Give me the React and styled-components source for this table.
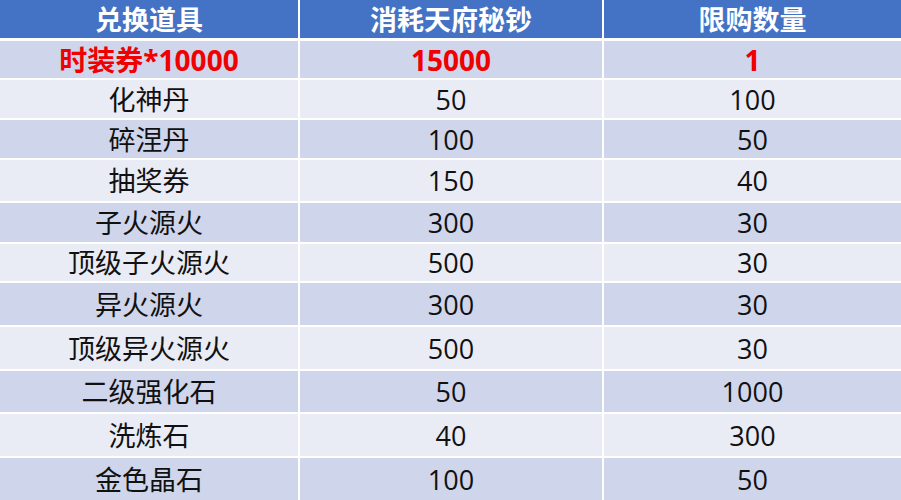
import React from 'react';
import styled, { createGlobalStyle } from 'styled-components';

const GlobalStyle = createGlobalStyle`
  html, body {
    margin: 0;
    padding: 0;
    background: #ffffff;
  }
  body {
    font-family: "Open Sans", "Noto Sans CJK SC", sans-serif;
  }
`;

const Table = styled.div`
  width: 901px;
  height: 500px;
  overflow: hidden;
  display: flex;
  flex-direction: column;
  background: #ffffff;
`;

const Row = styled.div`
  display: grid;
  grid-template-columns: 298px 302px 1fr;
  column-gap: 2px;
  height: ${(p) => p.$height}px;
  padding-bottom: ${(p) => (p.$header ? 3 : 2)}px;
  box-sizing: border-box;
  flex-shrink: 0;
`;

const Cell = styled.div`
  display: flex;
  align-items: center;
  justify-content: center;
  background: ${(p) => (p.$header ? '#4472c4' : p.$dark ? '#cfd5ea' : '#e9ebf5')};
  color: ${(p) => (p.$header ? '#ffffff' : p.$red ? '#f00000' : '#111111')};
  font-weight: ${(p) => (p.$header || p.$red ? 700 : 400)};
  font-size: ${(p) => (p.$red ? 28 : 27)}px;
  line-height: 1;
  white-space: nowrap;
`;

const header = ['兑换道具', '消耗天府秘钞', '限购数量'];

const rows = [
  { cells: ['时装券*10000', '15000', '1'], h: 39, red: true },
  { cells: ['化神丹', '50', '100'], h: 40 },
  { cells: ['碎涅丹', '100', '50'], h: 40 },
  { cells: ['抽奖券', '150', '40'], h: 43 },
  { cells: ['子火源火', '300', '30'], h: 41 },
  { cells: ['顶级子火源火', '500', '30'], h: 39 },
  { cells: ['异火源火', '300', '30'], h: 44 },
  { cells: ['顶级异火源火', '500', '30'], h: 44 },
  { cells: ['二级强化石', '50', '1000'], h: 43 },
  { cells: ['洗炼石', '40', '300'], h: 44 },
  { cells: ['金色晶石', '100', '50'], h: 44 },
];

export default function App() {
  return (
    <>
      <GlobalStyle />
      <Table>
        <Row $height={41} $header>
          {header.map((t) => (
            <Cell key={t} $header>{t}</Cell>
          ))}
        </Row>
        {rows.map((r, i) => (
          <Row key={i} $height={r.h}>
            {r.cells.map((c, j) => (
              <Cell key={j} $dark={i % 2 === 0} $red={r.red}>{c}</Cell>
            ))}
          </Row>
        ))}
      </Table>
    </>
  );
}
